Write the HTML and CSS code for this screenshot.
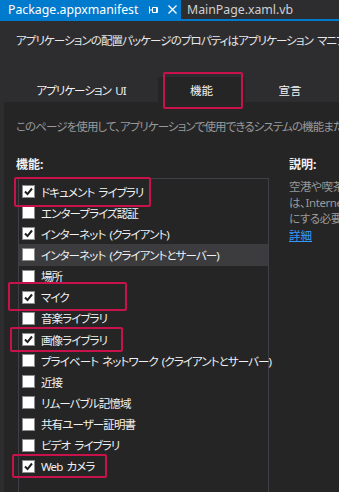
FILE: index.html
```html
<!DOCTYPE html>
<html lang="ja">
<head>
    <meta charset="UTF-8">
    <meta name="viewport" content="width=device-width, initial-scale=1.0">
    <title>Package.appxmanifest</title>
    <link rel="stylesheet" href="styles.css">
</head>
<body>
    <!-- document tabs -->
    <div class="doc-tabs">
        <div class="doc-tab active">
            <span class="doc-name">Package.appxmanifest</span>
            <svg class="pin" width="10" height="8" viewBox="0 0 10 8">
                <path d="M0.5 0.5v7M0.5 4h3M3.5 1.5h5v5h-5z" fill="none" stroke="#fff" stroke-width="1"/>
                <path d="M7.5 1.5v5" stroke="#fff" stroke-width="1"/>
            </svg>
            <svg class="close" width="9" height="9" viewBox="0 0 9 9">
                <path d="M0.5 0.5l8 8M8.5 0.5l-8 8" stroke="#fff" stroke-width="1.3"/>
            </svg>
        </div>
        <div class="doc-tab">MainPage.xaml.vb</div>
    </div>

    <div class="manifest-header">
        <p class="intro">アプリケーションの配置パッケージのプロパティはアプリケーション マニフェストで設定されます。</p>
        <div class="tabs">
            <div class="tab tab-ui">アプリケーション UI</div>
            <div class="tab tab-cap selected">機能</div>
            <div class="tab tab-decl">宣言</div>
        </div>
    </div>

    <div class="content">
        <p class="hint">このページを使用して、アプリケーションで使用できるシステムの機能またはデバイスを指定します。</p>
        <div class="columns">
            <div class="cap-col">
                <h3>機能:</h3>
                <ul class="cap-list">
                    <li><span class="box checked"></span>ドキュメント ライブラリ</li>
                    <li><span class="box"></span>エンタープライズ認証</li>
                    <li><span class="box checked"></span>インターネット (クライアント)</li>
                    <li class="current"><span class="box"></span>インターネット (クライアントとサーバー)</li>
                    <li><span class="box"></span>場所</li>
                    <li><span class="box checked"></span>マイク</li>
                    <li><span class="box"></span>音楽ライブラリ</li>
                    <li><span class="box checked"></span>画像ライブラリ</li>
                    <li><span class="box"></span>プライベート ネットワーク (クライアントとサーバー)</li>
                    <li><span class="box"></span>近接</li>
                    <li><span class="box"></span>リムーバブル記憶域</li>
                    <li><span class="box"></span>共有ユーザー証明書</li>
                    <li><span class="box"></span>ビデオ ライブラリ</li>
                    <li><span class="box checked"></span>Web カメラ</li>
                </ul>
            </div>
            <div class="desc-col">
                <h3>説明:</h3>
                <p class="desc-line">空港や喫茶店などのパブリック ネットワークに接続するに</p>
                <p class="desc-line">は、Internet (クライアントとサーバー) 機能を有効</p>
                <p class="desc-line">にする必要があります。</p>
                <a href="#" class="more">詳細</a>
            </div>
        </div>
    </div>

    <!-- annotation marks drawn over the screenshot -->
    <div class="mark mark-tab"></div>
    <div class="mark mark-docs"></div>
    <div class="mark mark-mic"></div>
    <div class="mark mark-pics"></div>
    <div class="mark mark-cam"></div>
</body>
</html>
```

FILE: styles.css
```css
/* VS dark theme manifest designer */
body {
    margin: 0;
    width: 339px;
    height: 492px;
    overflow: hidden;
    background-color: #252526;
    color: #f1f1f1;
    font-family: "Noto Sans", "Noto Sans CJK JP", sans-serif;
    font-size: 11.5px;
    letter-spacing: -0.9px;
    word-spacing: 2px;
    font-feature-settings: "palt";
    position: relative;
}

p, h3, ul {
    margin: 0;
    padding: 0;
}

.doc-tabs {
    display: flex;
    height: 19px;
    background-color: #2d2d30;
    border-bottom: 2px solid #007acc;
    white-space: nowrap;
    overflow: hidden;
    letter-spacing: 0;
    word-spacing: 0;
}

.doc-tab {
    display: flex;
    align-items: center;
    padding-left: 6px;
    font-size: 12.3px;
    color: #d0d0d0;
}

.doc-tab.active {
    width: 173px;
    flex-shrink: 0;
    padding-left: 8px;
    background-color: #007acc;
    color: #ffffff;
}

.doc-name {
    width: 141px;
}

.pin {
    margin-right: 9px;
}

.manifest-header {
    background-color: #2d2d30;
    padding-top: 12px;
}

.intro {
    padding-left: 16px;
    line-height: 16px;
    white-space: nowrap;
    overflow: hidden;
    color: #e8e8e8;
}

.tabs {
    display: flex;
    margin-top: 28px;
    padding-left: 4px;
    height: 25px;
}

.tab {
    display: flex;
    align-items: center;
    justify-content: center;
    white-space: nowrap;
    color: #f1f1f1;
}

.tab-ui {
    width: 154px;
}

.tab-cap {
    width: 87px;
    letter-spacing: 0;
}

.tab-decl {
    width: 90px;
    letter-spacing: 0;
}

.tab.selected {
    background-color: #252526;
}

.content {
    border-left: 4px solid #2d2d30;
    padding: 17px 0 0 12px;
    height: 373px;
    overflow: hidden;
}

.hint {
    line-height: 16px;
    color: #999999;
    white-space: nowrap;
}

.columns {
    display: flex;
    margin-top: 21px;
    gap: 20px;
}

.cap-col {
    width: 253px;
    flex-shrink: 0;
}

h3 {
    font-size: 12px;
    font-weight: bold;
    line-height: 16px;
    margin-top: 1px;
    letter-spacing: 0;
}

.cap-list {
    list-style: none;
    margin: 5px 0 0 2px;
    padding-top: 2px;
    border: 1px solid #3f3f46;
    border-bottom: none;
    height: 311px;
}

.cap-list li {
    display: flex;
    align-items: center;
    height: 21.15px;
    padding-left: 3px;
    white-space: nowrap;
}

.cap-list li.current {
    background-color: #3c3c3e;
}

.box {
    width: 11px;
    height: 11px;
    margin-right: 6px;
    background-color: #ffffff;
    border: 1px solid #8c8c8c;
    flex-shrink: 0;
}

.box.checked {
    background-image: url("data:image/svg+xml;utf8,<svg xmlns='http://www.w3.org/2000/svg' width='11' height='11' viewBox='0 0 11 11'><path d='M2 5.5l2.5 2.6L9 2.5' fill='none' stroke='%231e1e1e' stroke-width='2'/></svg>");
}

.desc-col {
    white-space: nowrap;
    color: #999999;
    overflow: hidden;
}

.desc-col h3 {
    color: #f1f1f1;
}

.desc-line {
    line-height: 16px;
    letter-spacing: -0.4px;
}

.desc-col h3 + .desc-line {
    margin-top: 6px;
}

.more {
    display: inline-block;
    margin-top: 1px;
    line-height: 16px;
    color: #3399ff;
    letter-spacing: 0;
}

.mark {
    position: absolute;
    border: 2px solid #c8124b;
    border-radius: 2px;
    box-sizing: border-box;
}

.mark-tab {
    left: 163px;
    top: 72px;
    width: 80px;
    height: 37px;
}

.mark-docs {
    left: 14px;
    top: 177px;
    width: 137px;
    height: 30px;
}

.mark-mic {
    left: 8px;
    top: 282px;
    width: 119px;
    height: 29px;
}

.mark-pics {
    left: 10px;
    top: 327px;
    width: 113px;
    height: 25px;
}

.mark-cam {
    left: 12px;
    top: 454px;
    width: 95px;
    height: 24px;
}
```
